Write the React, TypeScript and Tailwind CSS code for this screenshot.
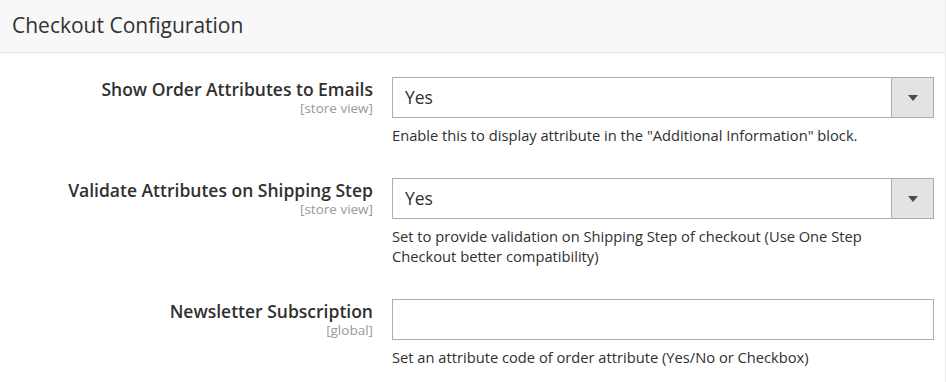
const rows = [
  {
    label: 'Show Order Attributes to Emails',
    scope: '[store view]',
    type: 'select',
    value: 'Yes',
    help: 'Enable this to display attribute in the "Additional Information" block.',
  },
  {
    label: 'Validate Attributes on Shipping Step',
    scope: '[store view]',
    type: 'select',
    value: 'Yes',
    help: 'Set to provide validation on Shipping Step of checkout (Use One Step Checkout better compatibility)',
  },
  {
    label: 'Newsletter Subscription',
    scope: '[global]',
    type: 'text',
    value: '',
    help: 'Set an attribute code of order attribute (Yes/No or Checkbox)',
  },
];

function SelectBox({ value }: { value: string }) {
  return (
    <div className="flex h-[41px] border border-[#adadad] bg-white">
      <div className="flex flex-1 items-center pl-[12px] text-[17.5px] text-[#303030]">{value}</div>
      <div className="flex w-[42px] items-center justify-center border-l border-[#adadad] bg-[#e3e3e3]">
        <svg width="10" height="6" viewBox="0 0 10 6">
          <path d="M0 0h10L5 6z" fill="#514943" />
        </svg>
      </div>
    </div>
  );
}

export default function App() {
  return (
    <div className="min-h-[382px] w-[946px] border-r border-[#ececec] bg-white font-['Open_Sans',sans-serif] text-[#303030]">
      <div className="flex h-[53px] items-center border-b border-[#e3e3e3] bg-[#f8f8f8] pl-[12px] text-[21px]">
        Checkout Configuration
      </div>
      <div className="flex flex-col gap-[33px] pr-[11px] pt-[24px]">
        {rows.map((r) => (
          <div key={r.label} className="flex gap-[19px]">
            <div className="flex w-[373px] flex-col items-end pt-[1px] text-right">
              <div className="text-[17.5px] font-semibold leading-[22px]">{r.label}</div>
              <div className="text-[13.5px] leading-[17px] text-[#999999]">{r.scope}</div>
            </div>
            <div className="flex-1">
              {r.type === 'select' ? (
                <SelectBox value={r.value} />
              ) : (
                <div className="h-[41px] border border-[#adadad] bg-white" />
              )}
              <div className="mt-[7px] pr-[55px] text-[14.7px] leading-[20px]">{r.help}</div>
            </div>
          </div>
        ))}
      </div>
    </div>
  );
}
